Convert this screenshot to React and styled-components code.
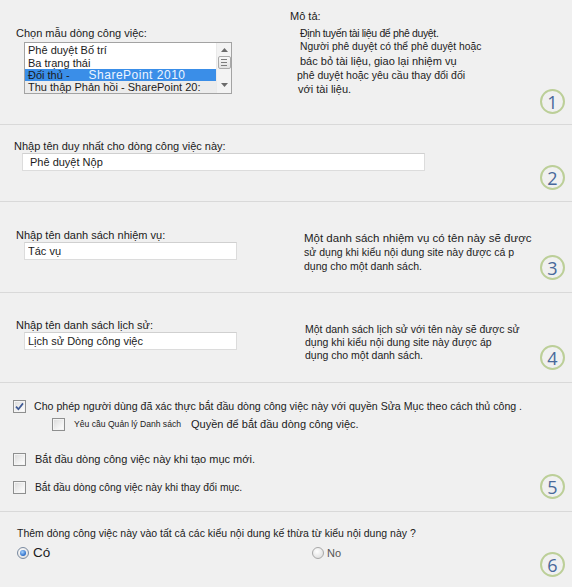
import React from "react";
import styled, { createGlobalStyle } from "styled-components";

const GlobalStyle = createGlobalStyle`
  html, body { margin: 0; padding: 0; background: #f0f0f0; }
  body {
    font-family: "Liberation Sans", Arial, sans-serif;
    color: #1b1b1b;
  }
  * { box-sizing: border-box; }
`;

const Page = styled.div`
  width: 572px;
  height: 587px;
  overflow: hidden;
  background: #f0f0f0;
`;

const Section = styled.section`
  display: flex;
  height: ${(p) => p.$h}px;
  padding-right: 7px;
  border-bottom: ${(p) => (p.$last ? "none" : "1px solid #d9d9d9")};
`;

const LeftCol = styled.div`
  flex: 0 0 ${(p) => p.$w}px;
  padding-top: ${(p) => p.$pt}px;
  padding-left: ${(p) => p.$pl ?? 16}px;
  display: flex;
  flex-direction: column;
  align-items: flex-start;
`;

const Stack = styled.div`
  flex: 1 1 auto;
  padding-top: ${(p) => p.$pt}px;
  padding-left: ${(p) => p.$pl ?? 0}px;
  display: flex;
  flex-direction: column;
  align-items: flex-start;
`;

const Label = styled.div`
  font-size: ${(p) => p.$size ?? 11}px;
  line-height: 13px;
  white-space: nowrap;
`;

const Desc = styled.div`
  padding-top: ${(p) => p.$pt}px;
  display: flex;
  flex-direction: column;
  align-items: flex-start;
`;

const DescBody = styled.div`
  margin-top: 3px;
  padding-left: 10px;
  display: flex;
  flex-direction: column;
`;

const DescLine = styled.div`
  font-size: ${(p) => p.$size ?? 10.5}px;
  line-height: ${(p) => p.$lh ?? 14}px;
  margin-left: ${(p) => p.$ml ?? 0}px;
  letter-spacing: ${(p) => p.$ls ?? 0}px;
  white-space: nowrap;
  color: #222;
`;

const Badge = styled.div`
  flex: 0 0 25px;
  width: 25px;
  height: 25px;
  margin-left: auto;
  align-self: flex-end;
  margin-bottom: ${(p) => p.$mb}px;
  border-radius: 50%;
  border: 2px solid #bccf98;
  display: grid;
  place-items: center;
  font-family: "Open Sans", Roboto, sans-serif;
  font-weight: 400;
  font-size: 18px;
  line-height: 1;
  color: #48689a;
  padding-top: 1px;
`;

/* list box */
const ListBox = styled.div`
  margin-top: 2px;
  margin-left: 8px;
  width: 208px;
  height: 52px;
  border: 1px solid #a3a3a3;
  background: #fff;
  display: flex;
`;

const ListItems = styled.div`
  flex: 1 1 auto;
  min-width: 0;
  display: flex;
  flex-direction: column;
`;

const ListItem = styled.div`
  height: ${(p) => p.$h ?? 13}px;
  display: flex;
  align-items: center;
  padding-left: 3px;
  font-size: ${(p) => p.$size ?? 11}px;
  white-space: nowrap;
  overflow: hidden;
  background: ${(p) => (p.$selected ? "#3a8ee8" : p.$muted ? "#ececec" : "transparent")};
`;

const SelectedAccent = styled.span`
  margin-left: 19px;
  font-size: 12px;
  letter-spacing: 0.5px;
  color: #eef5ff;
`;

const ScrollBar = styled.div`
  flex: 0 0 15px;
  background: #f3f3f3;
  border-left: 1px solid #eaeaea;
  display: flex;
  flex-direction: column;
  align-items: center;
  padding-top: 5px;
`;

const Thumb = styled.div`
  width: 13px;
  height: 13px;
  margin-top: 4px;
  border: 1px solid #a9a9a9;
  border-radius: 2px;
  background: linear-gradient(#f7f7f7, #e2e2e2);
  display: flex;
  flex-direction: column;
  justify-content: center;
  align-items: center;
  gap: 2px;
`;

const Grip = styled.span`
  width: 6px;
  height: 1px;
  background: #7c7c7c;
`;

const ArrowDown = styled.svg`
  margin-top: auto;
  margin-bottom: 6px;
`;

/* inputs */
const TextInput = styled.input`
  margin-top: ${(p) => p.$mt ?? 0}px;
  margin-left: 8px;
  width: ${(p) => p.$w}px;
  height: 18px;
  border: 1px solid #dcdcdc;
  border-top-color: #d0d0d0;
  background: #fff;
  padding: 0 6px 0 ${(p) => p.$pad ?? 6}px;
  font-family: "Liberation Sans", Arial, sans-serif;
  font-size: 11px;
  color: #1b1b1b;
  outline: none;
`;

/* checkboxes */
const CheckRow = styled.label`
  display: flex;
  align-items: center;
  height: 14px;
  margin-top: ${(p) => p.$mt ?? 0}px;
  padding-left: ${(p) => p.$pl ?? 13}px;
  white-space: nowrap;
`;

const Box = styled.span`
  flex: 0 0 13px;
  width: 13px;
  height: 13px;
  border: 1px solid #8e8f8f;
  background: linear-gradient(135deg, #d9d9d9 0%, #f2f2f2 60%, #ffffff 100%);
  box-shadow: inset 0 0 0 1px #f4f4f4;
  display: grid;
  place-items: center;
  margin-right: ${(p) => p.$gap ?? 8}px;
`;

const CheckText = styled.span`
  font-size: ${(p) => p.$size ?? 11}px;
  margin-right: ${(p) => p.$mr ?? 0}px;
`;

/* radios */
const RadioRow = styled.div`
  display: grid;
  grid-template-columns: 295px auto;
  align-items: center;
  margin-top: 5px;
`;

const RadioOption = styled.label`
  display: flex;
  align-items: center;
  gap: ${(p) => p.$gap ?? 4}px;
`;

const RadioDot = styled.span`
  width: 12px;
  height: 12px;
  border-radius: 50%;
  border: 1px solid ${(p) => (p.$on ? "#7a8aa0" : "#a8a8a8")};
  background: radial-gradient(circle at 40% 35%, #ffffff, #d8d8d8);
  display: grid;
  place-items: center;
  &::after {
    content: "";
    display: ${(p) => (p.$on ? "block" : "none")};
    width: 6px;
    height: 6px;
    border-radius: 50%;
    background: radial-gradient(circle at 40% 35%, #a8d4ff, #2a6cc8 70%, #1d4f9a);
  }
`;

const RadioText = styled.span`
  font-size: ${(p) => p.$size ?? 11}px;
  color: ${(p) => p.$color ?? "#1b1b1b"};
`;

function Check({ checked, gap }) {
  return (
    <Box $gap={gap}>
      {checked && (
        <svg width="9" height="9" viewBox="0 0 9 9">
          <path d="M1 4.6 L3.4 7.2 L8 1.4" fill="none" stroke="#3f5a95" strokeWidth="1.7" />
        </svg>
      )}
    </Box>
  );
}

export default function App() {
  return (
    <>
      <GlobalStyle />
      <Page>
        <Section $h={125}>
          <LeftCol $w={290} $pt={27}>
            <Label>Chọn mẫu dòng công việc:</Label>
            <ListBox>
              <ListItems>
                <ListItem $h={13}>Phê duyệt Bố trí</ListItem>
                <ListItem $h={13}>Ba trạng thái</ListItem>
                <ListItem $h={12} $selected>
                  Đối thủ -<SelectedAccent>SharePoint 2010</SelectedAccent>
                </ListItem>
                <ListItem $h={12} $muted $size={11}>
                  Thu thập Phản hồi - SharePoint 20:
                </ListItem>
              </ListItems>
              <ScrollBar>
                <svg width="7" height="4" viewBox="0 0 7 4">
                  <path d="M0 4 L3.5 0 L7 4 Z" fill="#6b6b6b" />
                </svg>
                <Thumb>
                  <Grip />
                  <Grip />
                  <Grip />
                </Thumb>
                <ArrowDown width="7" height="4" viewBox="0 0 7 4">
                  <path d="M0 0 L3.5 4 L7 0 Z" fill="#6b6b6b" />
                </ArrowDown>
              </ScrollBar>
            </ListBox>
          </LeftCol>
          <Desc $pt={10}>
            <Label>Mô tả:</Label>
            <DescBody>
              <DescLine $size={10.5} $ls={-0.35}>Định tuyến tài liệu để phê duyệt.</DescLine>
              <DescLine $size={10.3}>Người phê duyệt có thể phê duyệt hoặc</DescLine>
              <DescLine $size={11}>bác bỏ tài liệu, giao lại nhiệm vụ</DescLine>
              <DescLine $ml={-3}>phê duyệt hoặc yêu cầu thay đổi đối</DescLine>
              <DescLine $ml={-2} $size={11}>với tài liệu.</DescLine>
            </DescBody>
          </Desc>
          <Badge $mb={10}>1</Badge>
        </Section>

        <Section $h={77}>
          <Stack $pt={15} $pl={14}>
            <Label>Nhập tên duy nhất cho dòng công việc này:</Label>
            <TextInput $w={403} $pad={7} defaultValue="Phê duyệt Nộp" readOnly />
          </Stack>
          <Badge $mb={11}>2</Badge>
        </Section>

        <Section $h={91}>
          <LeftCol $w={304} $pt={27}>
            <Label>Nhập tên danh sách nhiệm vụ:</Label>
            <TextInput $w={213} $pad={3} defaultValue="Tác vụ" readOnly />
          </LeftCol>
          <Desc $pt={29}>
            <DescLine $size={11.5}>Một danh sách nhiệm vụ có tên này sẽ được</DescLine>
            <DescLine>sử dụng khi kiểu nội dung site này được cá p</DescLine>
            <DescLine>dụng cho một danh sách.</DescLine>
          </Desc>
          <Badge $mb={12}>3</Badge>
        </Section>

        <Section $h={90}>
          <LeftCol $w={305} $pt={26}>
            <Label>Nhập tên danh sách lịch sử:</Label>
            <TextInput $w={213} $pad={3} defaultValue="Lịch sử Dòng công việc" readOnly />
          </LeftCol>
          <Desc $pt={30}>
            <DescLine $lh={13}>Một danh sách lịch sử với tên này sẽ được sử</DescLine>
            <DescLine $lh={13}>dụng khi kiểu nội dung site này được áp</DescLine>
            <DescLine $lh={13}>dụng cho một danh sách.</DescLine>
          </Desc>
          <Badge $mb={12}>4</Badge>
        </Section>

        <Section $h={129}>
          <Stack $pt={16}>
            <CheckRow>
              <Check checked gap={8} />
              <CheckText $size={10.6}>
                Cho phép người dùng đã xác thực bắt đầu dòng công việc này với quyền Sửa Mục theo cách thủ công .
              </CheckText>
            </CheckRow>
            <CheckRow $mt={4} $pl={52}>
              <Check gap={9} />
              <CheckText $size={8.6} $mr={10}>Yêu cầu Quản lý Danh sách</CheckText>
              <CheckText $size={11}>Quyền để bắt đầu dòng công việc.</CheckText>
            </CheckRow>
            <CheckRow $mt={21}>
              <Check gap={9} />
              <CheckText $size={11}>Bắt đầu dòng công việc này khi tạo mục mới.</CheckText>
            </CheckRow>
            <CheckRow $mt={14}>
              <Check gap={9} />
              <CheckText $size={10.3}>Bắt đầu dòng công việc này khi thay đổi mục.</CheckText>
            </CheckRow>
          </Stack>
          <Badge $mb={12}>5</Badge>
        </Section>

        <Section $h={75} $last>
          <Stack $pt={15} $pl={17}>
            <Label $size={10.5}>
              Thêm dòng công việc này vào tất cả các kiểu nội dung kế thừa từ kiểu nội dung này ?
            </Label>
            <RadioRow>
              <RadioOption>
                <RadioDot $on />
                <RadioText $size={13.5}>Có</RadioText>
              </RadioOption>
              <RadioOption $gap={3}>
                <RadioDot />
                <RadioText $size={11} $color="#555">No</RadioText>
              </RadioOption>
            </RadioRow>
          </Stack>
          <Badge $mb={10}>6</Badge>
        </Section>
      </Page>
    </>
  );
}
